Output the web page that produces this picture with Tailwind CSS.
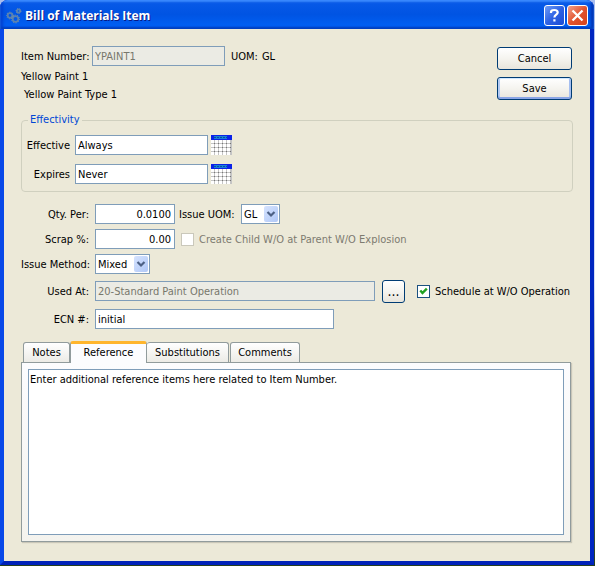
<!DOCTYPE html>
<html lang="en">
<head>
<meta charset="utf-8">
<title>Bill of Materials Item</title>
<script src="https://cdn.jsdelivr.net/npm/@tailwindcss/browser@4"></script>
</head>
<body class="h-screen overflow-hidden bg-linear-to-b from-[#a9bdee] via-[#d6dff5] to-[#26401c] pr-px pb-px font-['DejaVu_Sans_Condensed','DejaVu_Sans',sans-serif] text-[11px] leading-[15px] text-black">
<div class="flex h-full flex-col overflow-hidden rounded-t-lg bg-[#0831d9]">
  <header class="flex h-[29px] shrink-0 items-center gap-[3px] bg-linear-to-b from-[#0a5ae8] via-[#0054e3] to-[#0062f8] px-[6px] pt-[2px] shadow-[inset_0_2px_2px_#3b8cff,inset_0_-2px_2px_#0040c0,inset_3px_0_3px_#0040d0,inset_-3px_0_3px_#0030b0]">
    <svg class="size-4 shrink-0" viewBox="0 0 16 16" fill="none" aria-hidden="true">
      <g stroke="#5b82ae" stroke-width="1.800">
        <circle cx="4" cy="7.500" r="2.300"/><circle cx="12.500" cy="3" r="1.600"/><circle cx="9.500" cy="11" r="2.800"/>
      </g>
      <g stroke="#6f90b4" stroke-width="1" stroke-dasharray="1 1.500">
        <circle cx="4" cy="7.500" r="3.400"/><circle cx="12.500" cy="3" r="2.500"/><circle cx="9.500" cy="11" r="4"/>
      </g>
    </svg>
    <h1 class="flex-1 font-['Open_Sans','Noto_Sans',sans-serif] text-[12px] leading-[18px] font-bold whitespace-nowrap text-white [text-shadow:1px_1px_#0a1883]">Bill of Materials Item</h1>
    <div class="flex gap-[2px]">
      <button type="button" aria-label="Help" class="flex size-[21px] items-center justify-center rounded-[3px] border border-white bg-linear-to-br from-[#6f9bf5] via-[#2e62e4] to-[#1c4bd4]">
        <svg class="size-[17px]" viewBox="0 0 17 17" fill="none" stroke="#fff" stroke-width="2.200" aria-hidden="true"><path d="M5 6V5.200C5 3.600 6.500 3 8.300 3C10.300 3 11.700 3.800 11.700 5.500C11.700 7.800 8.400 7.700 8.400 10.600M8.400 12.200V14.400"/></svg>
      </button>
      <button type="button" aria-label="Close" class="flex size-[21px] items-center justify-center rounded-[3px] border border-white bg-linear-to-br from-[#f0a08a] via-[#e2532e] to-[#d8431a]">
        <svg class="size-[17px]" viewBox="0 0 17 17" fill="none" stroke="#fff" stroke-width="2.300" aria-hidden="true"><path d="M3.500 3.500L13.500 13.500M13.500 3.500L3.500 13.500"/></svg>
      </button>
    </div>
  </header>

  <div class="flex min-h-0 flex-1 border-x-4 border-b-4 border-t-0 border-r-[#0026c0] border-b-[#0022b8] border-l-[#0848e8]">
  <form class="flex min-w-0 flex-1 flex-col bg-[#ece9d8] pt-[17px] pr-[17px] pb-[19px] pl-[17px]">
    <div class="flex items-start justify-between">
      <div>
        <div class="flex h-5 items-center">
          <label for="item" class="w-[71px] whitespace-nowrap">Item Number:</label>
          <input id="item" disabled value="YPAINT1" class="h-5 w-[133px] border border-[#7f9db9] bg-[#ebebe4] px-[2px] text-[#77776c]">
          <span class="ml-[6px]">UOM:</span><span class="ml-1">GL</span>
        </div>
        <p class="mt-[3px]">Yellow Paint 1</p>
        <p class="mt-[3px] ml-[3px]">Yellow Paint Type 1</p>
      </div>
      <div class="mt-px mr-px flex flex-col gap-[7px]">
        <button type="button" class="h-[23px] w-[75px] rounded-[3px] border border-[#003c74] bg-linear-to-b from-white via-[#f5f4ef] to-[#e8e5dc]">Cancel</button>
        <button type="submit" class="h-[23px] w-[75px] rounded-[3px] border border-[#003c74] bg-linear-to-b from-white via-[#f5f4ef] to-[#e8e5dc] shadow-[inset_0_1px_#cee7ff,inset_0_-2px_#8aa5e6,inset_2px_0_#b4cbf3,inset_-2px_0_#a6bff0]">Save</button>
      </div>
    </div>

    <fieldset class="mt-[11px] h-[79px] rounded-[4px] border border-[#d0d0bf] px-1">
      <legend class="ml-[2px] px-[2px] leading-[14px] text-[#0046d5]">Effectivity</legend>
      <div class="mt-[8px] flex flex-col gap-[9px]">
        <div class="flex h-5 items-center">
          <label for="effective" class="w-[44px] text-right whitespace-nowrap">Effective</label>
          <input id="effective" value="Always" class="ml-[5px] h-5 w-[133px] border border-[#7f9db9] bg-white px-[2px]">
          <button type="button" aria-label="Choose effective date" class="ml-[2px] h-5 w-[22px]">
            <svg class="block h-5 w-[22px]" viewBox="0 0 22 20" aria-hidden="true"><path fill="#c4c4c4" d="M1 0H22V20H1z"/><path fill="#0a22e8" d="M1 0H22V5H1z"/><path fill="#1680d8" d="M4 1H17V4H4z"/><path stroke="#0a4aa0" stroke-dasharray="2 1" d="M4 2.500H17"/><path stroke="#fff" stroke-width="3" stroke-dasharray="3 1" d="M1 6.500H21M1 10.500H21M1 14.500H21M1 18.500H21"/><path stroke="#777" stroke-dasharray="1 3" d="M4 8.500H21M4 12.500H21M4 16.500H21"/></svg>
          </button>
        </div>
        <div class="flex h-5 items-center">
          <label for="expires" class="w-[44px] text-right whitespace-nowrap">Expires</label>
          <input id="expires" value="Never" class="ml-[5px] h-5 w-[133px] border border-[#7f9db9] bg-white px-[2px]">
          <button type="button" aria-label="Choose expiry date" class="ml-[2px] h-5 w-[22px]">
            <svg class="block h-5 w-[22px]" viewBox="0 0 22 20" aria-hidden="true"><path fill="#c4c4c4" d="M1 0H22V20H1z"/><path fill="#0a22e8" d="M1 0H22V5H1z"/><path fill="#1680d8" d="M4 1H17V4H4z"/><path stroke="#0a4aa0" stroke-dasharray="2 1" d="M4 2.500H17"/><path stroke="#fff" stroke-width="3" stroke-dasharray="3 1" d="M1 6.500H21M1 10.500H21M1 14.500H21M1 18.500H21"/><path stroke="#777" stroke-dasharray="1 3" d="M4 8.500H21M4 12.500H21M4 16.500H21"/></svg>
          </button>
        </div>
      </div>
    </fieldset>

    <div class="mt-3 flex flex-col gap-[5px]">
      <div class="flex h-5 items-center">
        <label for="qty" class="w-[68px] text-right whitespace-nowrap">Qty. Per:</label>
        <input id="qty" value="0.0100" class="ml-[6px] h-5 w-20 border border-[#7f9db9] bg-white px-[3px] text-right">
        <label for="uom" class="ml-1 w-[62px] whitespace-nowrap">Issue UOM:</label>
        <div class="relative h-5 w-[39px]">
          <select id="uom" class="h-5 w-full appearance-none border border-[#7f9db9] bg-white pl-[2px]"><option>GL</option></select>
          <svg class="pointer-events-none absolute top-[2px] right-[2px] h-4 w-[14px] rounded-[2px] bg-linear-to-br from-[#d6e3fe] to-[#b0c8f7]" viewBox="0 0 14 16" fill="none" aria-hidden="true"><path d="M3.500 6L7 9.500L10.500 6" stroke="#4d6185" stroke-width="2.200"/></svg>
        </div>
      </div>
      <div class="flex h-5 items-center">
        <label for="scrap" class="w-[68px] text-right whitespace-nowrap">Scrap %:</label>
        <input id="scrap" value="0.00" class="ml-[6px] h-5 w-20 border border-[#7f9db9] bg-white px-[3px] text-right">
        <input id="child" type="checkbox" disabled class="ml-[6px] size-[13px] appearance-none border border-[#cac8bb] bg-white">
        <label for="child" class="ml-[5px] whitespace-nowrap text-[#7d7b70]">Create Child W/O at Parent W/O Explosion</label>
      </div>
      <div class="flex h-5 items-center">
        <label for="method" class="w-[68px] text-right whitespace-nowrap">Issue Method:</label>
        <div class="relative ml-[6px] h-5 w-[55px]">
          <select id="method" class="h-5 w-full appearance-none border border-[#7f9db9] bg-white pl-[2px]"><option>Mixed</option></select>
          <svg class="pointer-events-none absolute top-[2px] right-[2px] h-4 w-[14px] rounded-[2px] bg-linear-to-br from-[#d6e3fe] to-[#b0c8f7]" viewBox="0 0 14 16" fill="none" aria-hidden="true"><path d="M3.500 6L7 9.500L10.500 6" stroke="#4d6185" stroke-width="2.200"/></svg>
        </div>
      </div>
    </div>
    <div class="mt-[5px] flex h-6 items-center">
      <label for="used" class="w-[68px] shrink-0 text-right whitespace-nowrap">Used At:</label>
      <input id="used" disabled value="20-Standard Paint Operation" class="ml-[6px] h-5 w-[280px] border border-[#7f9db9] bg-[#ebebe4] px-[2px] text-[#77776c]">
      <button type="button" aria-label="Browse operations" class="ml-[7px] h-[23px] w-[23px] shrink-0 rounded-[3px] border border-[#003c74] bg-linear-to-b from-white via-[#f5f4ef] to-[#e8e5dc] text-[14px]">...</button>
      <input id="schedule" type="checkbox" checked class="peer ml-3 size-[13px] shrink-0 appearance-none border border-[#1c5180] bg-white">
      <svg class="pointer-events-none -ml-[13px] hidden size-[13px] shrink-0 peer-checked:block" viewBox="0 0 13 13" fill="none" aria-hidden="true"><path d="M3.300 5.500L5.500 8L9.800 3.700" stroke="#21a121" stroke-width="2.400"/></svg>
      <label for="schedule" class="ml-[5px] whitespace-nowrap">Schedule at W/O Operation</label>
    </div>
    <div class="mt-[6px] flex h-5 items-center">
      <label for="ecn" class="w-[68px] text-right whitespace-nowrap">ECN #:</label>
      <input id="ecn" value="initial" class="ml-[6px] h-5 w-[239px] border border-[#7f9db9] bg-white px-[2px]">
    </div>

    <div class="mt-3 flex min-h-0 flex-1 flex-col">
      <div role="tablist" class="z-10 ml-[2px] flex h-[22px] items-end">
        <button type="button" role="tab" class="mb-px h-5 w-[47px] rounded-t-[3px] border border-b-0 border-[#919b9c] bg-linear-to-b from-white to-[#ecebe6]">Notes</button>
        <button type="button" role="tab" aria-selected="true" class="h-[22px] w-[77px] rounded-t-[3px] border-x border-t-[3px] border-x-[#919b9c] border-t-[#ffb52c] bg-[#fcfcfe] pb-[2px]">Reference</button>
        <button type="button" role="tab" class="mb-px h-5 w-[82px] rounded-t-[3px] border border-b-0 border-l-0 border-[#919b9c] bg-linear-to-b from-white to-[#ecebe6]">Substitutions</button>
        <button type="button" role="tab" class="mb-px ml-px h-5 w-[70px] rounded-t-[3px] border border-b-0 border-[#919b9c] bg-linear-to-b from-white to-[#ecebe6]">Comments</button>
      </div>
      <div role="tabpanel" class="-mt-px mr-[2px] flex min-h-0 flex-1 border border-[#919b9c] bg-linear-to-b from-[#fcfcfe] to-[#f4f3ee] p-[6px] shadow-[1px_1px_1px_#c9c6b8]">
        <textarea aria-label="Reference" class="min-h-0 flex-1 resize-none border border-[#7f9db9] bg-white px-px py-[2px]">Enter additional reference items here related to Item Number.</textarea>
      </div>
    </div>
  </form>
  </div>
</div>
</body>
</html>
